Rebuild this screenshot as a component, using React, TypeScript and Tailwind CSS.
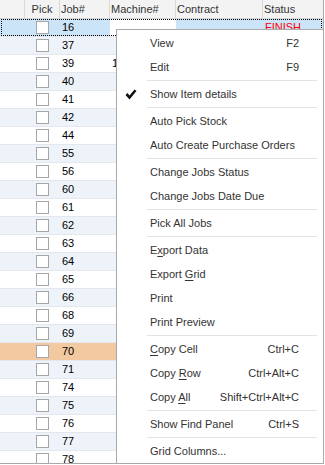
import React from "react";

const jobs = [16, 37, 39, 40, 41, 42, 44, 55, 56, 60, 61, 62, 63, 64, 65, 66, 68, 69, 70, 71, 74, 75, 76, 77, 78];

type MenuEntry =
  | { sep: true }
  | { sep?: false; label: React.ReactNode; shortcut?: string; checked?: boolean };

const u = (s: string) => <span className="underline underline-offset-2">{s}</span>;

const menu: MenuEntry[] = [
  { label: "View", shortcut: "F2" },
  { label: "Edit", shortcut: "F9" },
  { sep: true },
  { label: "Show Item details", checked: true },
  { sep: true },
  { label: "Auto Pick Stock" },
  { label: "Auto Create Purchase Orders" },
  { sep: true },
  { label: "Change Jobs Status" },
  { label: "Change Jobs Date Due" },
  { sep: true },
  { label: "Pick All Jobs" },
  { sep: true },
  { label: <>E{u("x")}port Data</> },
  { label: <>Export {u("G")}rid</> },
  { label: "Print" },
  { label: "Print Preview" },
  { sep: true },
  { label: <>{u("C")}opy Cell</>, shortcut: "Ctrl+C" },
  { label: <>Copy {u("R")}ow</>, shortcut: "Ctrl+Alt+C" },
  { label: <>Copy {u("A")}ll</>, shortcut: "Shift+Ctrl+Alt+C" },
  { sep: true },
  { label: "Show Find Panel", shortcut: "Ctrl+S" },
  { sep: true },
  { label: "Grid Columns..." },
];

function Checkbox() {
  return <div className="w-[13px] h-[13px] bg-white border border-[#a6a6a6]" />;
}

function GridRow({ job, i }: { job: number; i: number }) {
  const selected = i === 0;
  const bg = selected ? "bg-[#cce4f7]" : job === 70 ? "bg-[#f2c9a1]" : i % 2 === 1 ? "bg-[#eef3fa]" : "bg-white";
  return (
    <div className={`relative grid grid-cols-[25px_35px_50px_66px_87px_1fr] h-[18px] border-b border-[#e4e8ee] ${bg}`}>
      <div />
      <div className="flex items-center justify-center">
        <Checkbox />
      </div>
      <div className="flex items-center pl-[2px]">{job}</div>
      <div className={`flex items-center pl-[2px] ${selected ? "bg-white" : ""}`}>{job === 39 ? "1" : ""}</div>
      <div />
      <div className="flex items-center pl-[2px] text-[#ff0000]">{selected ? "FINISH" : ""}</div>
      {selected && <div className="absolute inset-0 left-[1px] right-[1px] border border-dotted border-black" />}
    </div>
  );
}

export default function App() {
  return (
    <div className="w-[325px] h-[465px] bg-white">
      <div
        className="relative w-[324px] h-[464px] overflow-hidden border-r border-b border-[#a9a9a9] text-[11px] text-black"
        style={{ fontFamily: '"Liberation Sans", Arial, sans-serif' }}
      >
        {/* Header */}
        <div className="grid grid-cols-[25px_35px_50px_66px_87px_1fr] h-[19px] bg-[#f3f3f3] border-b border-[#d4d4d4] text-[#333]">
          <div className="border-r border-[#d9d9d9]" />
          <div className="flex items-center justify-center border-r border-[#d9d9d9]">Pick</div>
          <div className="flex items-center pl-[1px] border-r border-[#d9d9d9]">Job#</div>
          <div className="flex items-center pl-[1px] border-r border-[#d9d9d9]">Machine#</div>
          <div className="flex items-center pl-[1px] border-r border-[#d9d9d9]">Contract</div>
          <div className="flex items-center pl-[1px]">Status</div>
        </div>

        {/* Rows */}
        <div className="flex flex-col">
          {jobs.map((j, i) => (
            <GridRow key={j} job={j} i={i} />
          ))}
        </div>

        {/* Context menu */}
        <div className="absolute left-[116px] top-[29px] w-[208px] h-[435px] bg-white border border-[#a9a9a9] pt-[1px] text-[#333]">
          {menu.map((m, idx) =>
            m.sep ? (
              <div key={idx} className="h-[3px] flex items-center pl-[30px] pr-[6px]">
                <div className="h-px w-full bg-[#e3e3e3]" />
              </div>
            ) : (
              <div key={idx} className="relative h-[24px] flex items-center pl-[33px] pr-[24px]">
                {m.checked && (
                  <svg className="absolute left-[8px] top-[7px]" width="12" height="11" viewBox="0 0 12 11">
                    <path d="M0.5 6 L2.5 4 L4.5 6.5 L9.5 0.5 L11.5 2 L4.5 10.5 Z" fill="#111" />
                  </svg>
                )}
                <span className="flex-1 whitespace-nowrap">{m.label}</span>
                {m.shortcut && <span className="whitespace-nowrap">{m.shortcut}</span>}
              </div>
            )
          )}
        </div>
      </div>
    </div>
  );
}
